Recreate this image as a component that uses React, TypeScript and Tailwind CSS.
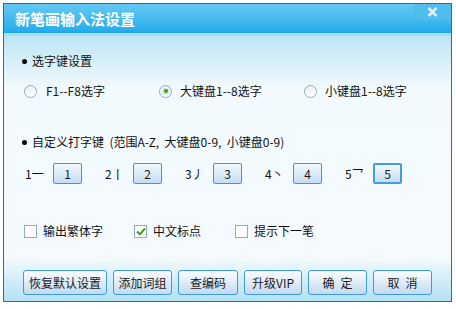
import React from "react";

const font = { fontFamily: '"Noto Sans CJK SC", "Noto Sans", sans-serif' };

function Radio({ checked }: { checked?: boolean }) {
  return (
    <span className="flex h-[13px] w-[13px] shrink-0 items-center justify-center rounded-full border border-[#8fabd2] bg-gradient-to-b from-[#e9eff6] to-white">
      {checked && (
        <span className="flex h-[7px] w-[7px] items-center justify-center rounded-full bg-[#d6e6d0]">
          <span className="h-[4px] w-[4px] rounded-full bg-[#3f9c1f]" />
        </span>
      )}
    </span>
  );
}

function Check({ checked }: { checked?: boolean }) {
  return (
    <span className="flex h-[13px] w-[13px] shrink-0 items-center justify-center border border-[#8fabd2] bg-white">
      {checked && (
        <svg width="10" height="9" viewBox="0 0 10 9">
          <path d="M1 4.5 L3.8 7.3 L9 1.5" stroke="#3f9c1f" strokeWidth="2" fill="none" />
        </svg>
      )}
    </span>
  );
}

function KeyBtn({ n, active }: { n: string; active?: boolean }) {
  return (
    <span
      className={
        "flex h-[21px] w-[29px] items-center justify-center rounded-[2px] bg-gradient-to-b from-[#f2f8fd] to-[#c6ddf1] text-[12px] text-[#1a1a1a] " +
        (active ? "border-2 border-[#3f9fe0]" : "border border-[#3a98d6]")
      }
    >
      {n}
    </span>
  );
}

function Btn({ label, w, split }: { label: string; w: string; split?: boolean }) {
  return (
    <span
      className={
        "flex h-[25px] items-center justify-center rounded-[3px] border border-[#3f9bd6] bg-gradient-to-b from-[#fbfdff] to-[#c2daef] text-[12px] text-[#1a1a1a] " +
        w
      }
    >
      {split ? (
        <>
          <span>{label[0]}</span>
          <span className="ml-[6px]">{label[1]}</span>
        </>
      ) : (
        label
      )}
    </span>
  );
}

export default function App() {
  const keys = [
    ["1一", "1"],
    ["2丨", "2"],
    ["3丿", "3"],
    ["4丶", "4"],
    ["5乛", "5"],
  ];
  return (
    <div className="h-[309px] w-[456px] bg-white pl-[3px] pt-[3px]" style={font}>
      <div className="flex h-[299px] w-[449px] flex-col border border-[#2f6e8c] bg-[#f5fbfd]">
        {/* title bar */}
        <div className="flex h-[29px] shrink-0 bg-gradient-to-b from-[#62c9f3] to-[#1aabea]">
          <span className="pl-[11px] pt-[4px] text-[15px] font-bold leading-[22px] text-white">
            新笔画输入法设置
          </span>
          <span className="flex-1" />
          <span className="flex h-[16px] w-[37px] items-center justify-center bg-[#4fbdf0]">
            <svg width="11" height="10" viewBox="0 0 11 10">
              <path d="M1.5 1 L9.5 9 M9.5 1 L1.5 9" stroke="#e3eef4" strokeWidth="2.6" />
            </svg>
          </span>
        </div>
        <div className="h-[3px] shrink-0 bg-[#a6dff4]" />
        {/* content */}
        <div className="flex flex-1 flex-col bg-gradient-to-b from-[#bce5f4] via-[#f3fafd] via-[20%] to-[#f5fbfd] text-[12px] text-[#111]">
          <div className="mt-[16px] flex h-[18px] items-center pl-[18px]">
            <span className="h-[5px] w-[5px] rounded-full bg-black" />
            <span className="ml-[5px]">选字键设置</span>
          </div>
          <div className="mt-[12px] flex h-[18px] items-center pl-[20px]">
            <div className="flex w-[135px] items-center gap-[9px]">
              <Radio />
              <span>F1--F8选字</span>
            </div>
            <div className="flex w-[145px] items-center gap-[8px]">
              <Radio checked />
              <span>大键盘1--8选字</span>
            </div>
            <div className="flex items-center gap-[8px]">
              <Radio />
              <span>小键盘1--8选字</span>
            </div>
          </div>
          <div className="mt-[33px] flex h-[18px] items-center pl-[18px]">
            <span className="h-[5px] w-[5px] rounded-full bg-black" />
            <span className="ml-[5px]">自定义打字键&nbsp;&nbsp;(范围A-Z,&nbsp; 大键盘0-9,&nbsp; 小键盘0-9)</span>
          </div>
          <div className="mt-[12px] flex h-[21px] items-center pl-[21px]">
            {keys.map(([l, n], i) => (
              <div key={n} className="flex w-[80px] items-center">
                <span className="w-[28px]">{l}</span>
                <KeyBtn n={n} active={i === 4} />
              </div>
            ))}
          </div>
          <div className="mt-[38px] flex h-[18px] items-center pl-[20px]">
            <div className="flex w-[110px] items-center gap-[6px]">
              <Check />
              <span>输出繁体字</span>
            </div>
            <div className="flex w-[101px] items-center gap-[6px]">
              <Check checked />
              <span>中文标点</span>
            </div>
            <div className="flex items-center gap-[6px]">
              <Check />
              <span>提示下一笔</span>
            </div>
          </div>
          <div className="flex-1" />
          <div className="flex h-[40px] gap-[6px] bg-gradient-to-b from-[#eef8fc] to-[#b3e1f4] pl-[19px] pt-[9px]">
            <Btn label="恢复默认设置" w="w-[84px]" />
            <Btn label="添加词组" w="w-[59px]" />
            <Btn label="查编码" w="w-[60px]" />
            <Btn label="升级VIP" w="w-[58px]" />
            <Btn label="确定" w="w-[59px]" split />
            <Btn label="取消" w="w-[59px]" split />
          </div>
        </div>
      </div>
    </div>
  );
}
